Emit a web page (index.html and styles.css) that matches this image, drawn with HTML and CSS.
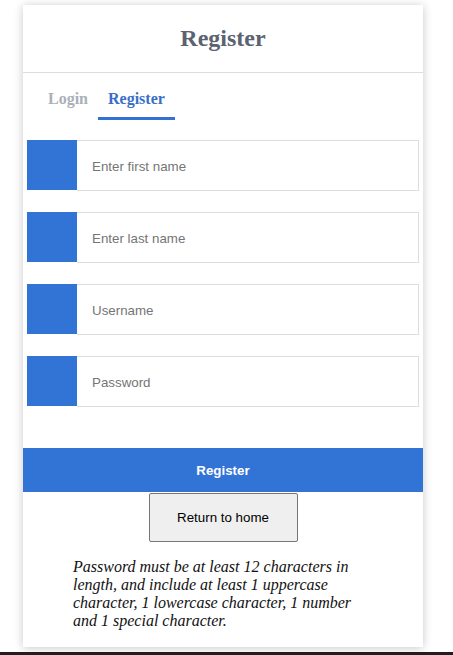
FILE: index.html
```html
<!DOCTYPE html>
<html>
<head>
<meta charset="utf-8">
<link rel="stylesheet" href="styles.css">
</head>
<body>
<div class="card">
  <div class="card-header"><h1 class="title">Register</h1></div>
  <div class="tabs">
    <span class="tab">Login</span>
    <span class="tab active">Register</span>
  </div>
  <form class="form">
    <div class="field"><span class="field-icon"></span><input class="field-input" type="text" placeholder="Enter first name"></div>
    <div class="field"><span class="field-icon"></span><input class="field-input" type="text" placeholder="Enter last name"></div>
    <div class="field"><span class="field-icon"></span><input class="field-input" type="text" placeholder="Username"></div>
    <div class="field"><span class="field-icon"></span><input class="field-input" type="password" placeholder="Password"></div>
  </form>
  <button class="submit" type="button">Register</button>
  <div class="home-row"><button class="home" type="button">Return to home</button></div>
  <p class="note">Password must be at least 12 characters in length, and include at least 1 uppercase character, 1 lowercase character, 1 number and 1 special character.</p>
</div>
<div class="footer-bar"></div>
</body>
</html>
```
FILE: styles.css
```css
html, body {
  margin: 0;
  padding: 0;
  background: #ffffff;
}
body {
  padding-top: 5px;
  overflow: hidden;
  height: 655px;
  box-sizing: border-box;
}
.card {
  width: 400px;
  margin-left: 23px;
  background: #ffffff;
  box-shadow: 0 1px 9px rgba(0, 0, 0, 0.22);
  display: flex;
  flex-direction: column;
}
.card-header {
  height: 67px;
  border-bottom: 1px solid #dddddd;
  display: flex;
  align-items: center;
  justify-content: center;
}
.title {
  margin: 0;
  font-family: "Liberation Serif", "Times New Roman", serif;
  font-weight: bold;
  font-size: 24px;
  color: #5b6270;
}
.tabs {
  display: flex;
  padding: 17px 15px 0;
}
.tab {
  padding: 0 10px 9px;
  font-family: "Liberation Serif", "Times New Roman", serif;
  font-weight: bold;
  font-size: 16px;
  color: #aab0b8;
  border-bottom: 3px solid transparent;
}
.tab.active {
  color: #3a6fc7;
  border-bottom-color: #3272d6;
}
.form {
  margin: 0;
  padding: 20px 4px 41px;
  display: flex;
  flex-direction: column;
  gap: 21px;
}
.field {
  display: flex;
  align-items: flex-start;
}
.field-icon {
  width: 50px;
  height: 50px;
  background: #3273d6;
  flex: none;
}
.field-input {
  flex: 1;
  height: 51px;
  box-sizing: border-box;
  margin: 0;
  border: 1px solid #dddddd;
  border-left: none;
  padding: 2px 15px 0;
  font-family: "Liberation Sans", Arial, sans-serif;
  font-size: 13.33px;
  color: #333;
  outline: none;
}
.field-input::placeholder {
  color: #757575;
}
.submit {
  margin: 0;
  height: 44px;
  border: none;
  background: #3273d6;
  color: #ffffff;
  font-family: "Liberation Sans", Arial, sans-serif;
  font-weight: bold;
  font-size: 13.33px;
  width: 100%;
}
.home-row {
  display: flex;
  justify-content: center;
  margin-top: 1px;
}
.home {
  width: 149px;
  height: 49px;
  margin: 0;
  background: #efefef;
  border: 1px solid #767676;
  border-radius: 2px;
  font-family: "Liberation Sans", Arial, sans-serif;
  font-size: 13.33px;
  color: #000000;
}
.note {
  margin: 16px 0 17px 50px;
  width: 290px;
  font-family: "Liberation Serif", "Times New Roman", serif;
  font-style: italic;
  font-size: 16px;
  line-height: 18px;
  color: #111111;
}
.footer-bar {
  margin-top: 5px;
  height: 10px;
  background: #1f1f1f;
}
```
